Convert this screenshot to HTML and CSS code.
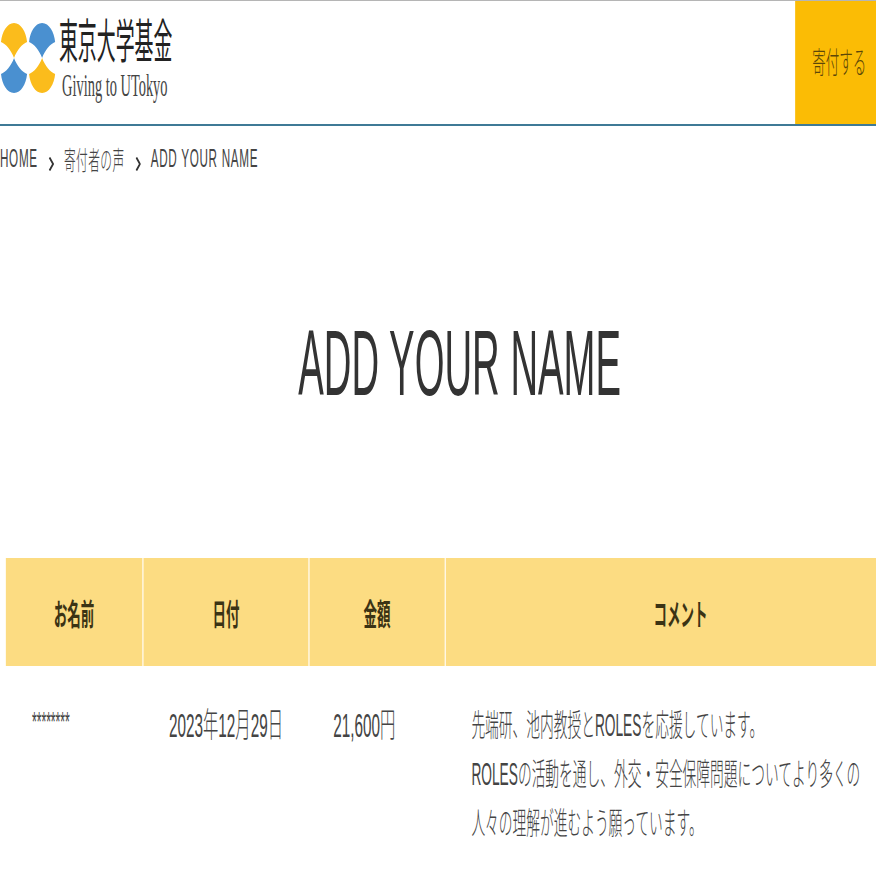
FILE: index.html
```html
<!DOCTYPE html>
<html lang="ja">
<head>
  <meta charset="UTF-8" />
  <meta name="viewport" content="width=device-width, initial-scale=1.0"/>
  <title>ADD YOUR NAME • 東京大学基金</title>
  <link rel="stylesheet" href="styles.css">
</head>

<body>
  <!-- the whole page is laid out wide, then squeezed to the window like the reference -->
  <div class="page">
    <header class="site-header">
      <a class="logo" href="#">
        <svg class="logo-mark" viewBox="0 0 57 72" preserveAspectRatio="none" aria-hidden="true">
          <path fill="#fbbc1c" d="M1 19C2 9 7 0 14 0C21 0 26 9 27 19C22 21 17 27 14 35C11 27 6 21 1 19Z"/>
          <path fill="#4a90d0" d="M29 19C30 9 35 0 42 0C49 0 54 9 55 19C50 21 45 27 42 35C39 27 34 21 29 19Z"/>
          <path fill="#4a90d0" d="M1 51C2 61 7 70 14 70C21 70 26 61 27 51C22 49 17 43 14 35C11 43 6 49 1 51Z"/>
          <path fill="#fbbc1c" d="M29 51C30 61 35 70 42 70C49 70 54 61 55 51C50 49 45 43 42 35C39 43 34 49 29 51Z"/>
        </svg>
        <div class="logo-text">
          <div class="logo-ja">東京大学基金</div>
          <div class="logo-en">Giving to UTokyo</div>
        </div>
      </a>
      <a class="donate-btn" href="#">寄付する</a>
    </header>

    <nav class="breadcrumb">
      <a class="crumb-latin" href="#">HOME</a>
      <svg class="crumb-sep" viewBox="0 0 12 30" preserveAspectRatio="none" aria-hidden="true"><path d="M2 1L10 15L2 29"/></svg>
      <a href="#">寄付者の声</a>
      <svg class="crumb-sep" viewBox="0 0 12 30" preserveAspectRatio="none" aria-hidden="true"><path d="M2 1L10 15L2 29"/></svg>
      <span class="crumb-latin">ADD YOUR NAME</span>
    </nav>

    <h1 class="page-title">ADD YOUR NAME</h1>

    <table class="donor-table">
      <thead>
        <tr>
          <th class="col-name">お名前</th>
          <th class="col-date">日付</th>
          <th class="col-amount">金額</th>
          <th class="col-comment">コメント</th>
        </tr>
      </thead>
      <tbody>
        <tr>
          <td class="donor-name">********</td>
          <td class="donor-num">2023年12月29日</td>
          <td class="donor-num donor-amount">21,600円</td>
          <td>先端研、池内教授とROLESを応援しています。<br>ROLESの活動を通し、外交・安全保障問題についてより多くの人々の理解が進むよう願っています。</td>
        </tr>
      </tbody>
    </table>
  </div>
</body>
</html>
```

FILE: styles.css
```css
html, body {
  margin: 0;
  overflow: hidden;
  height: 100%;
}

body {
  background: #fff;
  color: #444;
  font-family: "Liberation Sans", "Noto Sans CJK JP", sans-serif;
  font-weight: 300;
}

a {
  color: inherit;
  text-decoration: none;
}

.page {
  width: 1947px;
  transform: scaleX(0.45);
  transform-origin: 0 0;
}

.site-header {
  display: flex;
  justify-content: space-between;
  height: 123px;
  border-top: 1px solid #b5b5b5;
  border-bottom: 2px solid #3f7a96;
}

.logo {
  display: flex;
  align-items: flex-start;
  padding-top: 22px;
  color: #222;
}

.logo-mark {
  width: 127px;
  height: 72px;
  flex: none;
}

.logo-text {
  margin-left: 4px;
}

.logo-ja {
  font-size: 42px;
  line-height: 44px;
  font-weight: 400;
  white-space: nowrap;
  transform: scaleY(1.12);
  transform-origin: 0 100%;
}

.logo-en {
  margin-top: 2px;
  margin-left: 7px;
  font-family: "Liberation Serif", serif;
  font-size: 32px;
  line-height: 32px;
  color: #444;
  white-space: nowrap;
}

.donate-btn {
  width: 180px;
  padding: 0 0 6px 16px;
  box-sizing: border-box;
  display: flex;
  align-items: center;
  justify-content: center;
  background: #fbbc05;
  color: #5c4708;
  font-size: 30px;
}

.breadcrumb {
  display: flex;
  align-items: center;
  height: 64px;
  font-size: 26px;
  letter-spacing: 1px;
  white-space: nowrap;
}

.crumb-latin {
  letter-spacing: 1.5px;
}

.crumb-sep {
  width: 12px;
  height: 14px;
  margin: 11px 22px 0 24px;
  fill: none;
  stroke: #333;
  stroke-width: 4;
}

.page-title {
  height: 248px;
  margin: 0;
  padding: 123px 0 0 96px;
  box-sizing: border-box;
  text-align: center;
  font-size: 92px;
  line-height: 100px;
  font-weight: 400;
  color: #333;
  transform: scaleX(0.925);
  transform-origin: calc(50% + 48px) 50%;
}

.donor-table {
  margin: 120px 0 0 13px;
  border-collapse: collapse;
  table-layout: fixed;
  width: 1934px;
}

.col-name { width: 303px; }
.col-date { width: 366px; }
.col-amount { width: 300px; }

.donor-table th {
  height: 108px;
  padding: 0;
  background: #fcdc82;
  border-left: 3px solid #fff8e6;
  color: #3b3314;
  font-size: 30px;
  font-weight: 700;
}

.donor-table th:first-child {
  border-left: none;
}

.donor-table th.col-comment {
  padding-left: 86px;
}

.donor-table td {
  vertical-align: top;
  padding: 35px 20px 0 58px;
  font-size: 30.5px;
  line-height: 49px;
}

.donor-table .donor-num {
  font-size: 34px;
}

.donor-table .donor-amount {
  padding-left: 54px;
}

.donor-table .donor-name {
  padding-top: 39px;
  font-size: 27px;
  line-height: 34px;
}
```
